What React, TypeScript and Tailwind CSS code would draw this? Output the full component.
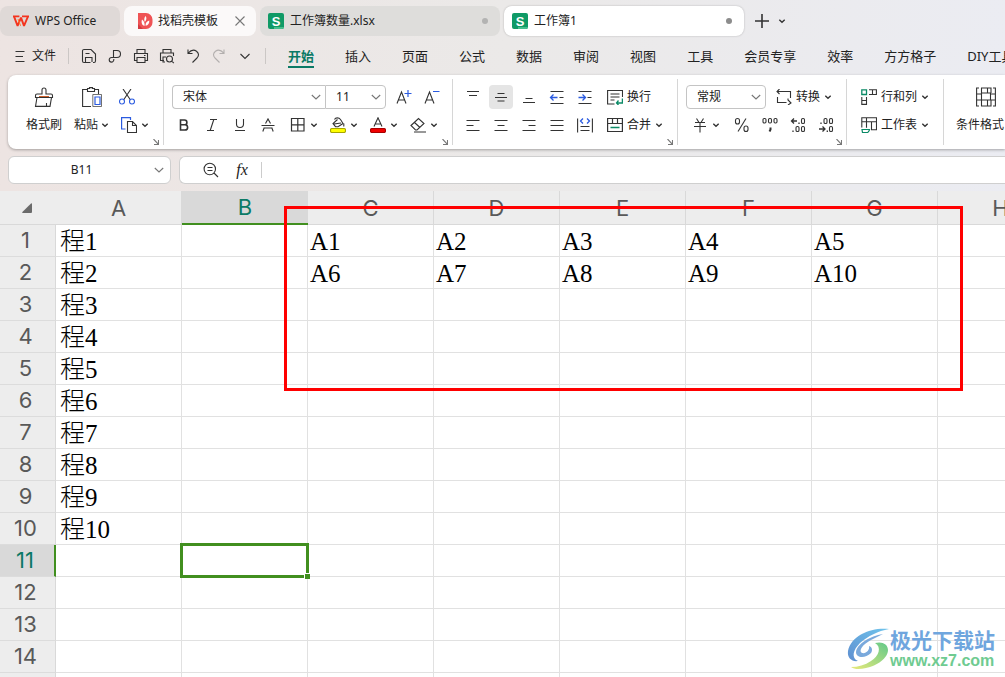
import { ReactNode } from 'react';

const columns = ['A', 'B', 'C', 'D', 'E', 'F', 'G', 'H', 'I', 'J', 'K', 'L', 'M', 'N', 'O', 'P'];
const rows = Array.from({ length: 36 }, (_, i) => i + 1);

const cells: Record<string, string> = {
  A1: '程1', A2: '程2', A3: '程3', A4: '程4', A5: '程5',
  A6: '程6', A7: '程7', A8: '程8', A9: '程9', A10: '程10',
  C1: 'A1', D1: 'A2', E1: 'A3', F1: 'A4', G1: 'A5',
  C2: 'A6', D2: 'A7', E2: 'A8', F2: 'A9', G2: 'A10',
};

const menus = ['开始', '插入', '页面', '公式', '数据', '审阅', '视图', '工具', '会员专享', '效率', '方方格子', 'DIY工具箱'];

const uiFont = "font-['Noto_Sans','Noto_Sans_CJK_SC',sans-serif]";

function Icon({ children, size = 'w-4 h-4', box = '0 0 16 16' }: { children: ReactNode; size?: string; box?: string }) {
  return (
    <svg viewBox={box} className={`${size} shrink-0`} fill="none" stroke="#333" strokeWidth="1.1" aria-hidden="true">
      {children}
    </svg>
  );
}

function Caret() {
  return (
    <Icon size="w-2 h-2" box="0 0 8 8">
      <path d="M1.3 2.8 4 5.3l2.7-2.5" strokeWidth="1.4" />
    </Icon>
  );
}

function Chevron() {
  return (
    <Icon size="w-2.5 h-2.5" box="0 0 10 10">
      <path d="M.8 3 5 7l4.2-4" stroke="#777" />
    </Icon>
  );
}

function IconButton({ label, active, children }: { label: string; active?: boolean; children: ReactNode }) {
  return (
    <button aria-label={label} className={`flex h-6 w-6 shrink-0 items-center justify-center rounded ${active ? 'bg-[#e5e5e5]' : ''}`}>
      {children}
    </button>
  );
}

function DropButton({ label, children }: { label: string; children: ReactNode }) {
  return (
    <button aria-label={label} className="flex h-6 w-9 shrink-0 items-center gap-1 pl-1.5">
      {children}
      <Caret />
    </button>
  );
}

function TextButton({ text, drop, children }: { text: string; drop?: boolean; children: ReactNode }) {
  return (
    <button className="flex h-6 shrink-0 items-center gap-1 px-1.5 text-xs whitespace-nowrap">
      {children}
      <span>{text}</span>
      {drop && <Caret />}
    </button>
  );
}

function Picker({ label, value, options, width, edge }: { label: string; value: string; options: string[]; width: string; edge: string }) {
  return (
    <div className={`relative flex h-6 items-center border border-[#c4c4c4] bg-white ${width} ${edge}`}>
      <select aria-label={label} defaultValue={value} className="h-full w-full appearance-none bg-transparent pl-2.5 text-xs outline-none">
        {options.map((o) => (
          <option key={o}>{o}</option>
        ))}
      </select>
      <span className="pointer-events-none absolute right-1">
        <Chevron />
      </span>
    </div>
  );
}

function Group({ children, launcher = true, last }: { children: ReactNode; launcher?: boolean; last?: boolean }) {
  return (
    <div className={`relative my-1 flex shrink-0 px-2 pt-1 pb-1.5 ${last ? '' : 'border-r border-[#d6d6d6]'}`}>
      {children}
      {launcher && (
        <button aria-label="更多设置" className="absolute right-1 bottom-0">
          <Icon size="w-1.5 h-1.5" box="0 0 6 6">
            <path d="M.5 0 5 4.8M5.5 1v4.5H1" stroke="#777" />
          </Icon>
        </button>
      )}
    </div>
  );
}

function Row({ children }: { children: ReactNode }) {
  return <div className="flex h-7 items-center gap-1">{children}</div>;
}

function SheetIcon() {
  return (
    <span className="relative flex h-4 w-4 shrink-0 items-center justify-center overflow-hidden rounded-xs bg-[#0f9a66] font-['Liberation_Sans',sans-serif] text-[13px] leading-none font-bold text-white">
      <span className="absolute right-0 bottom-0 h-0.5 w-2.5 bg-[#45bf8d]" />
      S
    </span>
  );
}

function TabBar() {
  return (
    <div className="flex items-center gap-1 pt-1.5 text-xs">
      <button className="flex h-[30px] w-[120px] shrink-0 items-center rounded-lg bg-[#dfd9d7] pl-3">
        <Icon size="w-[18px] h-3" box="0 0 18 12">
          <g stroke="#f3341f" strokeWidth="1.9">
            <path d="M1 1.4h6.4M10 1.4h7" />
            <path d="M2 1.4 5.6 10.8 9 2.6l3 8.2L16 1.4" strokeLinejoin="bevel" />
            <path d="m6 4 2.6 6.8" stroke="#ff7a2a" strokeWidth="1" />
          </g>
        </Icon>
        <span className="ml-[5px]">WPS Office</span>
      </button>
      <div className="flex h-[30px] w-[132px] shrink-0 items-center rounded-lg bg-[#fbf9f9] pr-2.5 pl-3.5">
        <Icon>
          <path d="M0 0h8a6.500 6.500 0 0 1 6.500 6.500v3A6.500 6.500 0 0 1 8 16H0Z" fill="#ef5355" stroke="none" />
          <path d="M0 11 5 16H0Z" fill="#d33a40" stroke="none" />
          <path d="M6.500 13C3.500 12 3.200 9 4 6.500 6 8 7 10 6.500 13ZM6.800 9C5.800 6.500 6.200 4.500 7.600 3c1.300 2 1 4-.8 6ZM7.500 12.800c0-3 1.300-4.600 3.800-5.300.2 3-1.100 4.800-3.800 5.300Z" fill="#fff" stroke="none" />
        </Icon>
        <button className="ml-1 flex-1 text-left">找稻壳模板</button>
        <button aria-label="关闭">
          <Icon size="w-3 h-3" box="0 0 12 12">
            <path d="m1.500 1.500 9 9m0-9-9 9" stroke="#777" />
          </Icon>
        </button>
      </div>
      <button className="flex h-[30px] w-[240px] shrink-0 items-center gap-1.5 rounded-lg bg-[#dedddb] px-2">
        <SheetIcon />
        <span className="flex-1 text-left">工作簿数量.xlsx</span>
        <span className="mr-1 h-1.5 w-1.5 rounded-full bg-[#b3b3b2]" />
      </button>
      <button className="flex h-[30px] w-[240px] shrink-0 items-center gap-1.5 rounded-lg bg-white px-2 shadow-[0_0_2px_#00000040]">
        <SheetIcon />
        <span className="flex-1 text-left">工作簿1</span>
        <span className="mr-1 h-1.5 w-1.5 rounded-full bg-[#8c8c8c]" />
      </button>
      <button aria-label="新建" className="ml-1.5">
        <Icon>
          <path d="M8 1v14M1 8h14" strokeWidth="1.6" />
        </Icon>
      </button>
      <button aria-label="标签列表" className="ml-1">
        <Caret />
      </button>
    </div>
  );
}

function MenuBar() {
  const quick = [
    { label: '保存', d: 'M9.500 14.500H3a1.500 1.500 0 0 1-1.500-1.500V3A1.500 1.500 0 0 1 3 1.500h7L14.500 6v7a1.500 1.500 0 0 1-1.500 1.500h-1M4.500 14V9.500h6.500V14M4.500 5.500h4' },
    { label: '输出为PDF', d: 'M6.500 9V2.500h3.500a3.500 3.500 0 0 1 0 7H4.500a2.300 2.300 0 1 0 2.300 2.300V11M8 9.500h2' },
    { label: '打印', d: 'M4 5.500v-4h8v4M4 12.500H1.500v-7h13v7H12M4 9.500h8v5H4zM11 7.500h1.500' },
    { label: '打印预览', d: 'M4 5V1.500h8V5M5 12.500H1.500V5h13v3M6 14H4V9h3M13.500 11a3 3 0 1 1-6 0 3 3 0 0 1 6 0ZM12.800 13.200l2 2' },
    { label: '撤销', d: 'M3 1.500v4h4.500M3.200 5.200C6 2 9 1.500 11.500 3.200c2.600 2 2.500 4.600.5 6.800l-4.500 4.500' },
    { label: '恢复', d: 'M13 1.500v4H8.500M12.800 5.200C10 2 7 1.500 4.500 3.200c-2.600 2-2.500 4.600-.5 6.800l4.500 4.500' },
    { label: '自定义', d: 'm3.500 6 4.500 4.500L12.500 6' },
  ];

  return (
    <div className="flex h-[39px] shrink-0 items-center pl-3">
      <button className="flex shrink-0 items-center gap-1 text-xs">
        <Icon>
          <path d="M3.500 3.500h9M3.500 8.500h7.500M3.500 13.500h9" />
        </Icon>
        文件
      </button>
      <span className="ml-3 h-4 w-px shrink-0 bg-[#cbc7c5]" />
      <div className="ml-[7px] flex shrink-0">
        {quick.map((q) => (
          <button key={q.label} aria-label={q.label} className={`flex h-6 w-[26px] items-center justify-center ${q.label === '恢复' ? 'opacity-30' : ''}`}>
            <Icon>
              <path d={q.d} />
            </Icon>
          </button>
        ))}
      </div>
      <span className="ml-[7px] h-4 w-px shrink-0 bg-[#cbc7c5]" />
      <nav className="ml-[22px] flex gap-[31px] text-[13px] leading-5 whitespace-nowrap">
        {menus.map((m) => (
          <button key={m} className={m === '开始' ? 'border-y-2 border-t-transparent border-b-[#0b7a66] font-bold text-[#0b7a66]' : 'border-y-2 border-transparent'}>
            {m}
          </button>
        ))}
      </nav>
    </div>
  );
}

function Ribbon() {
  return (
    <div className="ml-2 flex shrink-0 overflow-hidden rounded-l-lg bg-white text-[#222] shadow-[0_1px_3px_#00000050]">
      {/* Clipboard */}
      <Group>
        <button className="ml-1 flex flex-col items-center px-1.5 text-xs">
          <span className="flex h-7 items-center">
            <Icon size="w-5 h-5" box="0 0 20 20">
              <path d="M8 7V3a2 2 0 0 1 4 0v4h5a1.500 1.500 0 0 1 1.500 1.500v2h-17v-2A1.500 1.500 0 0 1 3 7ZM3 10.500 1.500 19.400h14.500l1.500-8.900M12.500 19v-3" />
              <path d="M5 9.500h10" stroke="#d0602a" />
            </Icon>
          </span>
          <span className="flex h-7 items-center">格式刷</span>
        </button>
        <button className="flex flex-col items-center px-1.5 text-xs">
          <span className="flex h-7 items-center">
            <Icon size="w-5 h-5" box="0 0 20 20">
              <path d="M9 19.500H.6v-17H5M13 2.500h3.500V7M5.500 4.500v-3h2V.6h3v.9h2v3Z" />
              <path d="M13 10h5v7.500h-5Z" stroke="#2b5be0" strokeWidth="1.200" />
              <path d="M10.800 19.500v-12h8.700v12Z" strokeWidth=".7" />
            </Icon>
          </span>
          <span className="flex h-7 items-center gap-[3px]">
            粘贴
            <Caret />
          </span>
        </button>
        <div className="mr-1">
          <Row>
            <IconButton label="剪切">
              <Icon>
                <path d="m4 0 7.500 11M12 0 4.500 11" />
                <g stroke="#2b5be0">
                  <circle cx="3" cy="12.500" r="2.500" />
                  <circle cx="13" cy="12.500" r="2.500" />
                </g>
              </Icon>
            </IconButton>
          </Row>
          <Row>
            <DropButton label="复制">
              <Icon>
                <path d="M4.500 12H.6V.6h8.900V3" stroke="#2b5be0" strokeWidth="1.200" />
                <path d="M6.500 4.500h5l4 4v7h-9ZM11.500 4.500v4h4" />
              </Icon>
            </DropButton>
          </Row>
        </div>
      </Group>

      {/* Font */}
      <Group>
        <div>
          <Row>
            <div className="flex">
              <Picker label="字体" value="宋体" options={['宋体', '黑体', '楷体']} width="w-[153px]" edge="rounded-l border-r-0" />
              <Picker label="字号" value="11" options={['9', '10', '11', '12', '14']} width="w-[61px]" edge="rounded-r" />
            </div>
            <span className="ml-0.5 flex gap-1">
              <IconButton label="增大字号">
                <Icon>
                  <path d="M1 14.500 5.500 3l4.500 11.500M2.500 11h6" />
                  <path d="M8.500 4.500h7M12 1v7" stroke="#2b5be0" strokeWidth="1.200" />
                </Icon>
              </IconButton>
              <IconButton label="减小字号">
                <Icon>
                  <path d="M1 14.500 5.500 3l4.500 11.500M2.500 11h6" />
                  <path d="M9 2.500h6.500" stroke="#2b5be0" strokeWidth="1.200" />
                </Icon>
              </IconButton>
            </span>
          </Row>
          <Row>
            <IconButton label="加粗">
              <Icon>
                <path d="M4.500 3h4a2.400 2.400 0 0 1 0 4.800h-4ZM4.500 7.800H9a2.600 2.600 0 0 1 0 5.200H4.500Z" strokeWidth="1.600" />
              </Icon>
            </IconButton>
            <IconButton label="倾斜">
              <Icon>
                <path d="M6 2.500h7M3 13.500h7M9.800 2.500 6.200 13.500" />
              </Icon>
            </IconButton>
            <IconButton label="下划线">
              <Icon>
                <path d="M4.500 2v5a3.500 3.500 0 0 0 7 0V2M3 13.500h10" />
              </Icon>
            </IconButton>
            <IconButton label="删除线">
              <Icon>
                <path d="M5.500 6.500 8 2l2.500 4.500M1.500 8.500h13M4.300 10.500 2.800 14.500M11.700 10.500l1.500 4M4.500 11h7" />
              </Icon>
            </IconButton>
            <DropButton label="边框">
              <Icon>
                <path d="M1.500 1.500h12.500v12.500H1.500ZM7.800 1.500V14M1.500 7.800H14" strokeWidth="1.200" />
              </Icon>
            </DropButton>
            <DropButton label="填充颜色">
              <Icon>
                <path d="M4.500 2.500C5.500.3 9 .3 10.500 2.500L13 6.500 8 9.700H5.500L3 6.500l4.500-4M4 7l7-1" />
                <path d="M13.800 6.500V9.500" />
                <rect x=".5" y="11.500" width="15" height="4" rx="1.500" fill="#ff0" stroke="#a8a600" />
              </Icon>
            </DropButton>
            <DropButton label="字体颜色">
              <Icon>
                <path d="M4 9.500 8 .8l4 8.700M5.300 7h5.400" />
                <rect x=".5" y="11.500" width="15" height="4" rx="1.500" fill="#f00000" stroke="#a80000" />
              </Icon>
            </DropButton>
            <DropButton label="清除">
              <Icon>
                <path d="M1 8.500 8.500 1.500 14 6.500l-7 6.500H5.500ZM4.500 5.500l5.500 5M4 15h12" />
              </Icon>
            </DropButton>
          </Row>
        </div>
      </Group>

      {/* Alignment */}
      <Group>
        <div>
          <Row>
            <IconButton label="顶端对齐"><Icon><path d="M2 2.500h12M4 6.500h8" /></Icon></IconButton>
            <IconButton label="垂直居中" active><Icon><path d="M4.500 4.500h7M2 8.500h12M4.500 12h7" /></Icon></IconButton>
            <IconButton label="底端对齐"><Icon><path d="M4.500 9.500h7M2 13.500h12" /></Icon></IconButton>
            <IconButton label="减少缩进">
              <Icon>
                <path d="M1.500 2.500h13M1.500 14.500h13M10.500 8.500h4" />
                <path d="M8.500 8.500H1.500M4.500 5.500l-3 3 3 3" stroke="#2b5be0" strokeWidth="1.300" />
              </Icon>
            </IconButton>
            <IconButton label="增加缩进">
              <Icon>
                <path d="M1.500 2.500h13M1.500 14.500h13M10.500 8.500h4" />
                <path d="M1.500 8.500H8.500M5.500 5.500l3 3-3 3" stroke="#2b5be0" strokeWidth="1.300" />
              </Icon>
            </IconButton>
            <TextButton text="换行">
              <Icon>
                <path d="M7.500 15H.6V1.500h14.900V8M3.500 5H12.500M3.500 8H12.500M3.500 11h4" />
                <path d="M15.400 9.500v4.500H9.500M11.500 11.500 9.500 14l2 2" stroke="#0b8a66" strokeWidth="1.300" />
              </Icon>
            </TextButton>
          </Row>
          <Row>
            <IconButton label="左对齐"><Icon><path d="M1.500 3.500h13M1.500 8.500h7M1.500 13.500h13" /></Icon></IconButton>
            <IconButton label="水平居中"><Icon><path d="M1.500 3.500h13M4.500 8.500h7M1.500 13.500h13" /></Icon></IconButton>
            <IconButton label="右对齐"><Icon><path d="M1.500 3.500h13M7.500 8.500h7M1.500 13.500h13" /></Icon></IconButton>
            <IconButton label="两端对齐"><Icon><path d="M1.500 3.500h13M1.500 8.500h13M1.500 13.500h13" /></Icon></IconButton>
            <IconButton label="分散对齐">
              <Icon>
                <path d="M.6 1.500v14M15.400 1.500v14M3.500 9.500h9M3.500 13.500h9" />
                <path d="M6 1.500 3.500 4 6 6.500M10 1.500 12.500 4 10 6.500" stroke="#2b5be0" strokeWidth="1.300" />
              </Icon>
            </IconButton>
            <TextButton text="合并" drop>
              <Icon>
                <path d="M.6 1.500h14.800v13H.6ZM.6 6.500h14.800M5.500 1.500v5M10.500 1.500v5" strokeWidth="1.200" />
                <path d="M3.500 10.500h9" stroke="#0b8a66" strokeWidth="1.300" />
              </Icon>
            </TextButton>
          </Row>
        </div>
      </Group>

      {/* Number format */}
      <Group>
        <div>
          <Row>
            <Picker label="数字格式" value="常规" options={['常规', '数值', '货币', '日期']} width="w-20" edge="rounded" />
            <TextButton text="转换" drop>
              <Icon>
                <path d="M1.500 8v5.500h9M14.500 9V2.500H1M3.500 0 1 2.500 3.500 5M12 9.500v1.500l3 3-3 2" />
              </Icon>
            </TextButton>
          </Row>
          <Row>
            <DropButton label="货币">
              <Icon>
                <path d="m4.500 1.500 2.500 4M11.500 1.500l-2.500 4M3 5.500h10M2 9.500h12M8 5.500V15.500" />
              </Icon>
            </DropButton>
            <span className="ml-1 flex gap-1">
              <IconButton label="百分比">
                <Icon>
                  <rect x="1.500" y="1.500" width="4" height="5.500" rx="2" />
                  <rect x="10" y="9" width="4" height="5.500" rx="2" />
                  <path d="M12 1.500 4 14.500" />
                </Icon>
              </IconButton>
              <IconButton label="千位分隔">
                <Icon>
                  <rect x="1" y="1.500" width="3" height="4.500" rx="1.200" />
                  <rect x="6.500" y="1.500" width="3" height="4.500" rx="1.200" />
                  <rect x="12" y="1.500" width="3" height="4.500" rx="1.200" />
                  <path d="M8.500 10.500v2l-1 2" strokeWidth="2" />
                </Icon>
              </IconButton>
              <IconButton label="增加小数位">
                <Icon>
                  <path d="M7 4H1.500M4 1.500 1.500 4 4 6.500M3 13.500V15M9 5.500V7" strokeWidth="1.300" />
                  <rect x="11.500" y="1.500" width="3" height="5" rx="1.300" />
                  <rect x="6" y="9.500" width="3" height="5" rx="1.300" />
                  <rect x="11.500" y="9.500" width="3" height="5" rx="1.300" />
                </Icon>
              </IconButton>
              <IconButton label="减少小数位">
                <Icon>
                  <path d="M1 12h6M4.500 9.500 7 12l-2.500 2.500M3 5.500V7M9.300 13.500V15" strokeWidth="1.300" />
                  <rect x="6" y="1.500" width="3" height="5" rx="1.300" />
                  <rect x="11.500" y="1.500" width="3" height="5" rx="1.300" />
                  <rect x="11.500" y="9.500" width="3" height="5" rx="1.300" />
                </Icon>
              </IconButton>
            </span>
          </Row>
        </div>
      </Group>

      {/* Rows and worksheets */}
      <Group launcher={false}>
        <div>
          <Row>
            <TextButton text="行和列" drop>
              <Icon>
                <path d="M8 .8h7.400v4.700H8M11.500.8v4.700M.8 8v7.400h4.700V8M.8 11.500h4.700" />
                <path d="M.8.8h4.700v4.700H.8Z" stroke="#0b8a66" strokeWidth="1.300" />
              </Icon>
            </TextButton>
          </Row>
          <Row>
            <TextButton text="工作表" drop>
              <Icon>
                <path d="M.8 10.500V.8h14.700v12H10M.8 4.800h14.700M5.500.8v10M10.500 4.800v8" />
                <path d="M1 12.500h8c-1 .5-1 2.500-2.500 3H1.500Z" stroke="#0b8a66" strokeWidth="1.200" />
              </Icon>
            </TextButton>
          </Row>
        </div>
      </Group>

      {/* Styles */}
      <Group launcher={false} last>
        <button className="ml-1 flex shrink-0 flex-col items-center text-xs whitespace-nowrap">
          <span className="flex h-7 items-center">
            <Icon size="w-5 h-5" box="0 0 20 20">
              <path d="M3 1H.6v18H3M17 1h2.400v18H17M.6 7H5M.6 13H5M15 7h4.400M15 13h4.400" />
              <path d="M5.500 1h6v5h-6ZM5.500 6h9v7h-9ZM5.500 13h6v6h-6ZM11.500 1H15v5M11.500 19H15v-6" />
            </Icon>
          </span>
          <span className="flex h-7 items-center gap-1">
            条件格式
            <Caret />
          </span>
        </button>
      </Group>
    </div>
  );
}

function FormulaBar() {
  return (
    <div className="flex shrink-0 gap-2 py-[7px] pl-2">
      <div className="flex h-7 w-[163px] shrink-0 items-center rounded-md border border-[#cfcfcf] bg-white pr-1.5">
        <input aria-label="名称框" defaultValue="B11" className="min-w-0 flex-1 text-center text-xs outline-none" />
        <button aria-label="名称列表">
          <Chevron />
        </button>
      </div>
      <div className="flex h-7 flex-1 items-center rounded-l-md border border-r-0 border-[#cfcfcf] bg-white pl-[23px]">
        <button aria-label="浏览公式结果">
          <Icon>
            <path d="M12.500 7a5.700 5.700 0 1 1-11.400 0 5.700 5.700 0 0 1 11.400 0ZM11 11l4 4M4.500 5.500h5M4.500 8.500h5" />
          </Icon>
        </button>
        <button aria-label="插入函数" className="ml-3.5 w-[18px] font-['Liberation_Serif',serif] text-base leading-none italic">
          fx
        </button>
        <span className="ml-2.5 h-4 w-px bg-[#cccccc]" />
        <input aria-label="编辑栏" className="min-w-0 flex-1 px-2 text-xs outline-none" />
      </div>
    </div>
  );
}

function Sheet() {
  return (
    <div className="relative min-h-0 flex-1 overflow-hidden bg-white">
      <table className="border-separate border-spacing-0">
        <thead className="font-['Inter',sans-serif] text-[22px] leading-none text-[#595959]">
          <tr>
            <th className="h-[34px] w-14 min-w-14 border-b border-[#d9d9d9] bg-[#ededed] p-0">
              <svg viewBox="0 0 12 12" className="ml-[21px] h-3 w-3" aria-hidden="true">
                <path d="M10 1.500q1-.8 1 .6V10q0 1-1 1H2q-1.600 0-.6-1Z" fill="#6b6b6b" />
              </svg>
            </th>
            {columns.map((c) => (
              <th
                key={c}
                scope="col"
                className={`h-[34px] w-[126px] min-w-[126px] p-0 font-normal ${
                  c === 'B' ? 'border-b-2 border-[#418f1f] bg-[#d9d9d9] text-[#0b7a66]' : 'border-r border-b border-[#d9d9d9] bg-[#ededed]'
                }`}
              >
                {c}
              </th>
            ))}
          </tr>
        </thead>
        <tbody>
          {rows.map((r) => (
            <tr key={r}>
              <th
                scope="row"
                className={`h-8 border-b border-b-[#dcdcdc] p-0 pr-1 pb-0.5 text-center font-['Inter',sans-serif] text-[22px] leading-none font-normal ${
                  r === 11 ? 'border-r-2 border-r-[#418f1f] bg-[#d9d9d9] text-[#0b7a66]' : 'border-r border-r-[#d9d9d9] bg-[#ededed] text-[#595959]'
                }`}
              >
                {r}
              </th>
              {columns.map((c) => (
                <td
                  key={c}
                  className={`relative h-8 border-r border-b border-[#e1e1e1] pt-0.5 pb-0 font-['Liberation_Serif','Noto_Sans_CJK_SC',serif] text-[25px] leading-6 font-light text-black ${
                    c === 'A' ? 'pl-1' : 'pl-0.5'
                  }`}
                >
                  {cells[`${c}${r}`]}
                  {c === 'B' && r === 11 && (
                    <div className="absolute -inset-0.5 z-10 border-3 border-[#418f1f]">
                      <span className="absolute -right-1 -bottom-1 h-1.5 w-1.5 border-t border-l border-white bg-[#418f1f]" />
                    </div>
                  )}
                </td>
              ))}
            </tr>
          ))}
        </tbody>
      </table>

      {/* Highlighted range */}
      <div className="absolute top-[15px] left-[284px] h-[185px] w-[679px] border-3 border-[#ff0000]" />

      <div className="absolute right-2.5 bottom-1.5 flex items-center">
        <svg viewBox="0 0 44 44" className="h-11 w-11" aria-hidden="true">
          <defs>
            <linearGradient id="wave" x1="0" y1="1" x2="1" y2="0">
              <stop offset="0" stopColor="#5f8fd0" />
              <stop offset="1" stopColor="#6fc4ec" />
            </linearGradient>
            <linearGradient id="leaf" x1="0" y1="1" x2="1" y2="0">
              <stop offset="0" stopColor="#e9ea7a" />
              <stop offset="1" stopColor="#62c98a" />
            </linearGradient>
          </defs>
          <path d="M43 2C26 0 5 8 2 24c-1 7 4 11 10 10C5 31 7 23 14 16 22 9 32 4 43 2Z" fill="url(#wave)" />
          <path d="M37 7C24 9 11 17 10 25c0 6 9 7 15 1 2-3 1-6-2-7 1 4-3 8-7 7-4-2 1-9 9-13 4-2 8-4 12-6Z" fill="#7aa9dc" />
          <path d="M29 16c7 4 4 13-4 18-6 4-13 6-20 6 4 3 10 2 15 1 11-2 22-10 22-18 0-6-6-9-13-7Z" fill="url(#leaf)" />
        </svg>
        <div className="flex flex-col font-bold">
          <span className="font-['Noto_Sans_CJK_SC',sans-serif] text-[21px] leading-6 text-[#6fa6de]">极光下载站</span>
          <span className="font-['Liberation_Sans',sans-serif] text-base leading-5 text-[#6fcb91]">www.xz7.com</span>
        </div>
      </div>
    </div>
  );
}

export default function App() {
  return (
    <div className={`flex h-screen flex-col overflow-hidden bg-linear-to-r from-[#ede4e2] via-[#ebe9e8] to-[#ebecf2] text-[#222] ${uiFont}`}>
      <TabBar />
      <MenuBar />
      <Ribbon />
      <FormulaBar />
      <Sheet />
    </div>
  );
}
